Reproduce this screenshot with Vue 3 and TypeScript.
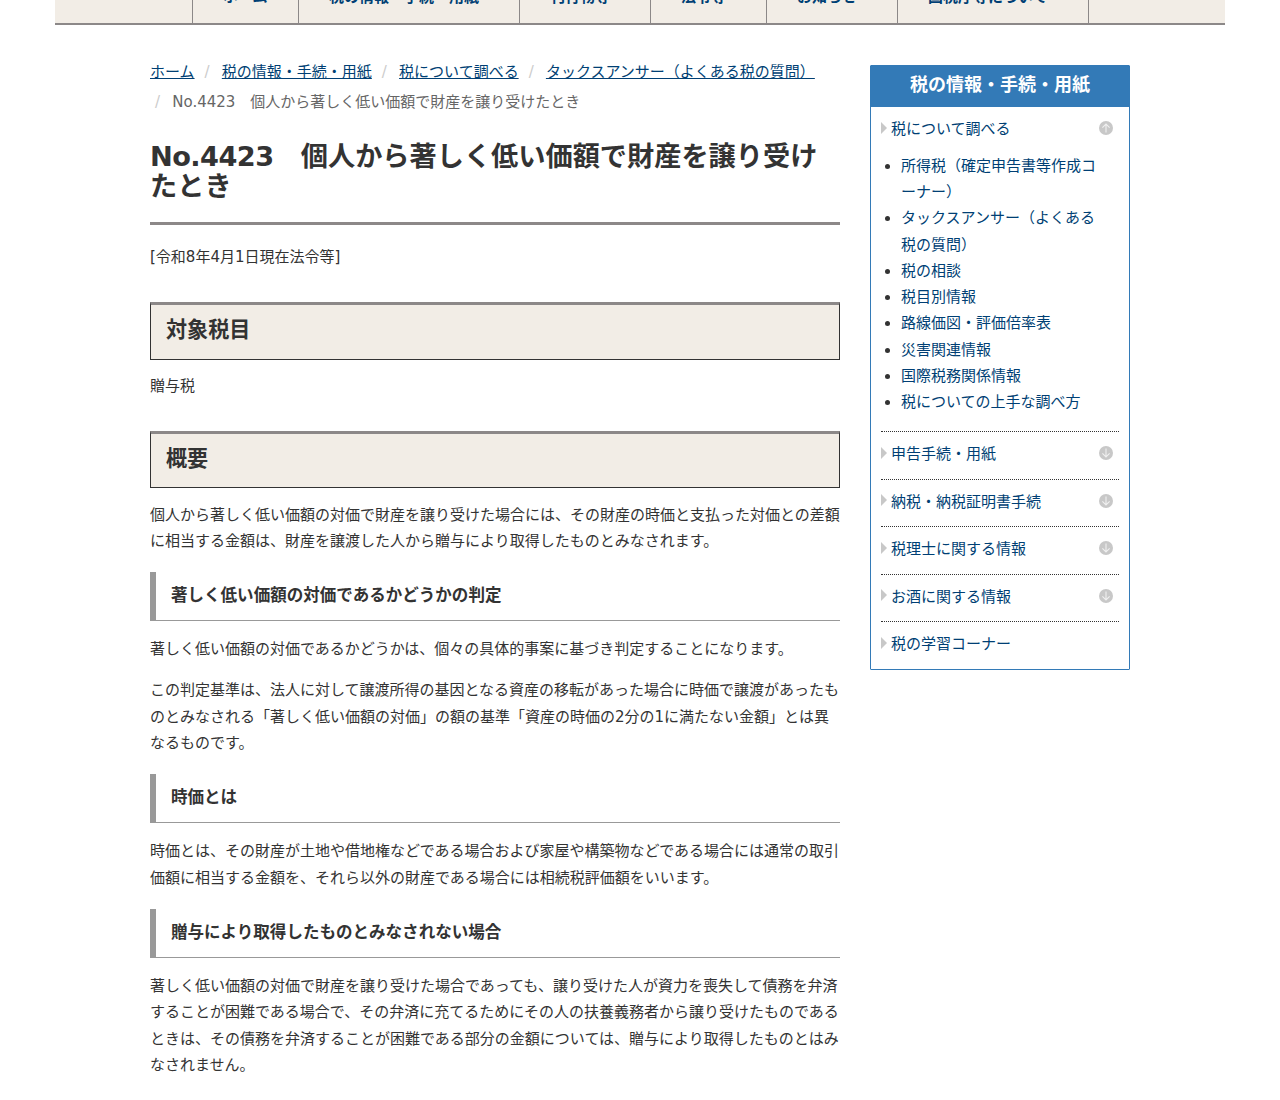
<script setup lang="ts">
const navItems: { label: string; cls: string }[] = [
  { label: 'ホーム', cls: 'w1' },
  { label: '税の情報・手続・用紙', cls: 'w2' },
  { label: '刊行物等', cls: 'w3' },
  { label: '法令等', cls: 'w4' },
  { label: 'お知らせ', cls: 'w5' },
  { label: '国税庁等について', cls: 'w6' },
]
const crumbs: string[] = ['ホーム', '税の情報・手続・用紙', '税について調べる', 'タックスアンサー（よくある税の質問）']
const subList: string[] = ['所得税（確定申告書等作成コーナー）', 'タックスアンサー（よくある税の質問）', '税の相談', '税目別情報', '路線価図・評価倍率表', '災害関連情報', '国際税務関係情報', '税についての上手な調べ方']
const sideLinks: { label: string; icon: boolean }[] = [
  { label: '申告手続・用紙', icon: true },
  { label: '納税・納税証明書手続', icon: true },
  { label: '税理士に関する情報', icon: true },
  { label: 'お酒に関する情報', icon: true },
  { label: '税の学習コーナー', icon: false },
]
</script>

<template>
  <div class="page">
    <nav class="nav">
      <a v-for="n in navItems" :key="n.label" class="nav-item" :class="n.cls" href="#"><span class="nav-label">{{ n.label }}</span></a>
    </nav>
    <div class="wrap">
      <main class="main">
        <ol class="crumbs">
          <li v-for="(c, i) in crumbs" :key="c" class="crumb"><span v-if="i" class="sep">/</span><a href="#">{{ c }}</a></li>
          <li class="crumb current"><span class="sep">/</span>No.4423　個人から著しく低い価額で財産を譲り受けたとき</li>
        </ol>
        <h1 class="title"><span class="num">No.4423</span>　個人から著しく低い価額で財産を譲り受けたとき</h1>
        <p class="date">[令和8年4月1日現在法令等]</p>
        <h2 class="h2">対象税目</h2>
        <p class="p">贈与税</p>
        <h2 class="h2">概要</h2>
        <p class="p">個人から著しく低い価額の対価で財産を譲り受けた場合には、その財産の時価と支払った対価との差額に相当する金額は、財産を譲渡した人から贈与により取得したものとみなされます。</p>
        <h3 class="h3">著しく低い価額の対価であるかどうかの判定</h3>
        <p class="p">著しく低い価額の対価であるかどうかは、個々の具体的事案に基づき判定することになります。</p>
        <p class="p">この判定基準は、法人に対して譲渡所得の基因となる資産の移転があった場合に時価で譲渡があったものとみなされる「著しく低い価額の対価」の額の基準「資産の時価の2分の1に満たない金額」とは異なるものです。</p>
        <h3 class="h3">時価とは</h3>
        <p class="p">時価とは、その財産が土地や借地権などである場合および家屋や構築物などである場合には通常の取引価額に相当する金額を、それら以外の財産である場合には相続税評価額をいいます。</p>
        <h3 class="h3">贈与により取得したものとみなされない場合</h3>
        <p class="p">著しく低い価額の対価で財産を譲り受けた場合であっても、譲り受けた人が資力を喪失して債務を弁済することが困難である場合で、その弁済に充てるためにその人の扶養義務者から譲り受けたものであるときは、その債務を弁済することが困難である部分の金額については、贈与により取得したものとはみなされません。</p>
      </main>
      <aside class="side">
        <h2 class="side-head">税の情報・手続・用紙</h2>
        <div class="side-body">
          <div class="side-row open">
            <span class="tri"></span><a href="#">税について調べる</a>
            <svg class="arrow" viewBox="0 0 14 14"><circle cx="7" cy="7" r="7" fill="#c8c8c8"/><path d="M7 11.5V3M3.4 6.6 7 3l3.6 3.6" fill="none" stroke="#f0f0f0" stroke-width="1.1"/></svg>
          </div>
          <ul class="sub">
            <li v-for="s in subList" :key="s"><a href="#">{{ s }}</a></li>
          </ul>
          <div v-for="l in sideLinks" :key="l.label" class="side-row line">
            <span class="tri"></span><a href="#">{{ l.label }}</a>
            <svg v-if="l.icon" class="arrow" viewBox="0 0 14 14"><circle cx="7" cy="7" r="7" fill="#c8c8c8"/><path d="M7 2.5V11M3.4 7.4 7 11l3.6-3.6" fill="none" stroke="#f0f0f0" stroke-width="1.1"/></svg>
          </div>
        </div>
      </aside>
    </div>
  </div>
</template>

<style>
html, body { margin: 0; background: #fff; }
</style>

<style scoped>
.page {
  width: 1280px;
  height: 1100px;
  overflow: hidden;
  font-family: "DejaVu Sans", "Noto Sans CJK JP", sans-serif;
  font-size: 15px;
  line-height: 1.75;
  color: #333;
}
a { color: #003f74; text-decoration: none; }
.nav {
  margin: 0 55px;
  height: 23px;
  display: flex;
  padding-left: 137px;
  background: #f2ede6;
  border-bottom: 2px solid #8c8888;
  overflow: hidden;
}
.nav-item {
  display: block;
  box-sizing: border-box;
  border-left: 1px solid #8c8888;
  padding-left: 30px;
  height: 23px;
  font-weight: 700;
  white-space: nowrap;
}
.w1 { width: 106px; }
.w2 { width: 221px; }
.w3 { width: 131px; }
.w4 { width: 116px; }
.w5 { width: 131px; }
.w6 { width: 192px; border-right: 1px solid #8c8888; }
.nav-label { display: block; line-height: 1; margin-top: -10px; }
.wrap {
  display: flex;
  gap: 30px;
  padding: 32px 150px 0;
}
.main { width: 690px; flex: none; }
.crumbs { list-style: none; margin: 0; padding: 0; display: flex; flex-wrap: wrap; line-height: 30px; }
.crumb { margin-right: 5px; }
.crumb a { color: #003f74; text-decoration: underline; }
.sep { color: #ccc; padding: 0 12.2px 0 5px; }
.current { color: #666; }
.title {
  margin: 25px 0 0;
  padding-bottom: 20px;
  border-bottom: 3px solid #8c8888;
  font-size: 27.2px;
  line-height: 30px;
  font-weight: 700;
}
.num { letter-spacing: -0.55px; }
.p, .date { margin: 0 0 15px; }
.date { margin: 18.5px 0 32.5px; }
.h2 {
  margin: 31px 0 13.75px;
  box-sizing: border-box;
  height: 57.25px;
  padding: 0 15px;
  background: #f2ede6;
  border: 1px solid #333;
  border-top: 3px solid #8c8888;
  font-size: 21.1px;
  font-weight: 700;
  line-height: 50px;
}
.h3 {
  margin: 18px 0 15.2px;
  box-sizing: border-box;
  height: 49px;
  padding-left: 15px;
  border-left: 6px solid #999;
  border-bottom: 1px solid #999;
  font-size: 16.55px;
  font-weight: 700;
  line-height: 47px;
}
.side {
  width: 260px;
  flex: none;
  margin-top: 8px;
  box-sizing: border-box;
  border: 1px solid #337ab7;
  border-radius: 1px;
  align-self: flex-start;
}
.side-head {
  margin: 0;
  height: 41px;
  background: #337ab7;
  color: #fff;
  font-size: 18px;
  font-weight: 700;
  line-height: 38px;
  text-align: center;
}
.side-body { padding: 9px 10px 0; }
.side-row {
  position: relative;
  padding-left: 10px;
  height: 36.5px;
  line-height: 26px;
}
.side-row.line { border-top: 1px dotted #333; height: 47.5px; padding-top: 9px; box-sizing: border-box; }
.tri {
  position: absolute;
  left: 0;
  top: 6px;
  border-left: 6px solid #c8c8c8;
  border-top: 6px solid transparent;
  border-bottom: 6px solid transparent;
}
.side-row.line .tri { top: 14.5px; }
.arrow { position: absolute; right: 6px; top: 5px; width: 14px; height: 14px; }
.side-row.line .arrow { top: 14px; }
.sub { margin: 0.25px 0 15.75px; padding: 0 20px; }
.sub li { line-height: 26.25px; }
</style>
